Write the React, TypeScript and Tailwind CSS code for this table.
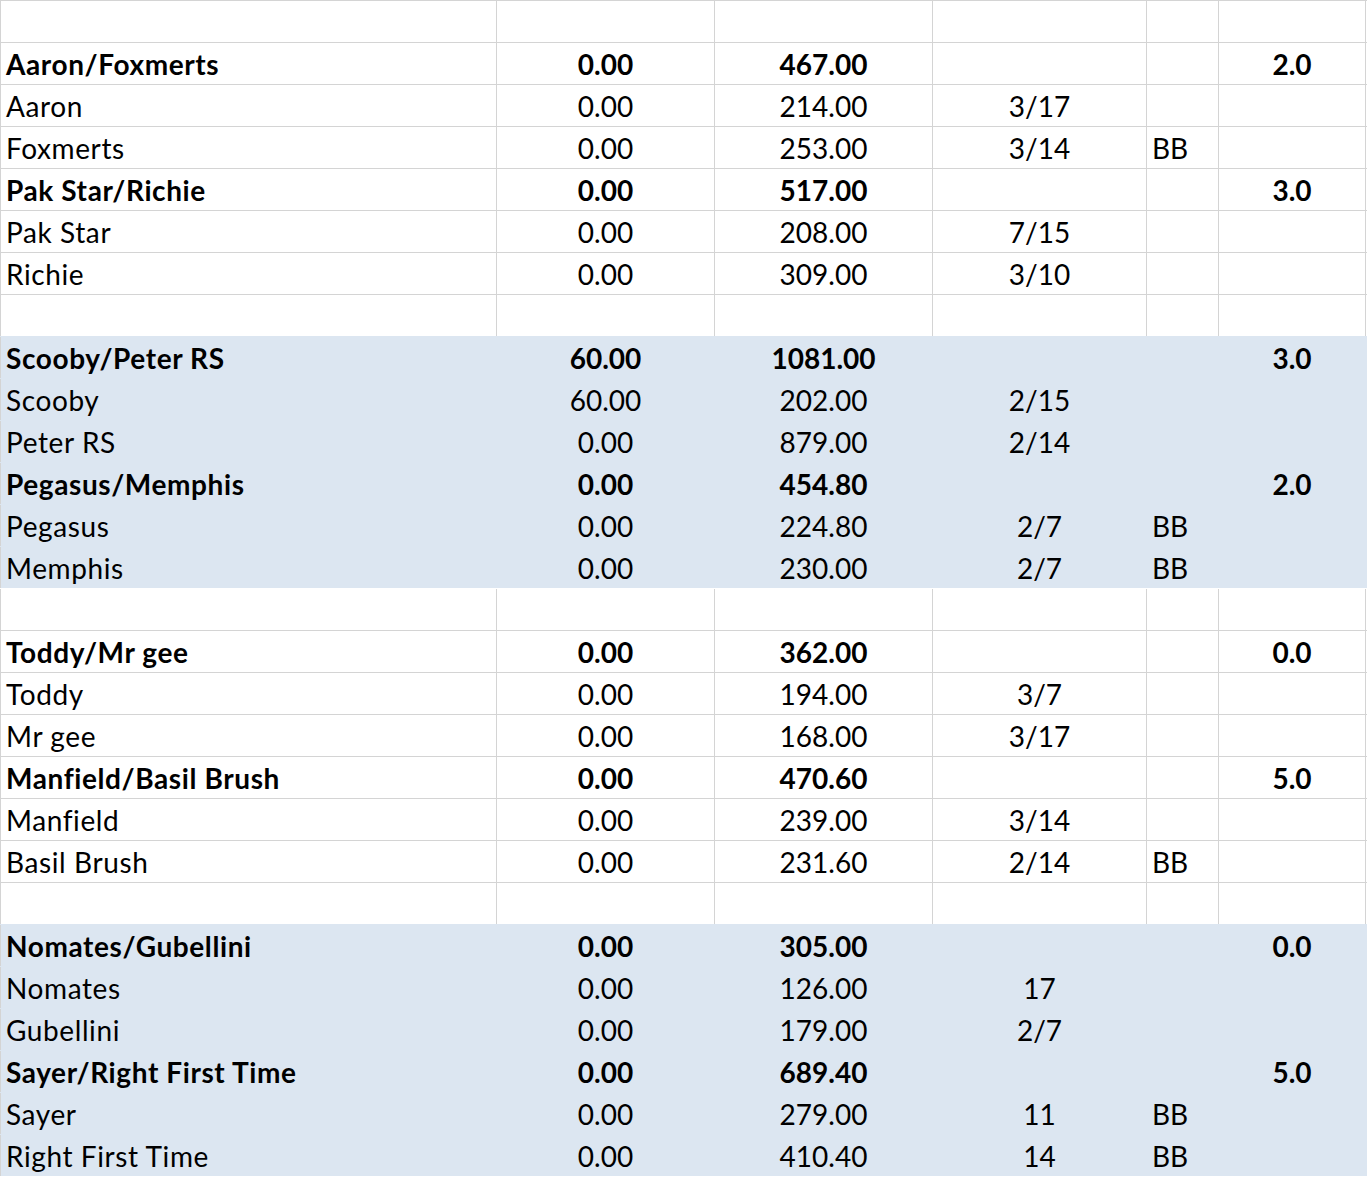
type Row = {
  name?: string;
  a?: string;
  b?: string;
  c?: string;
  d?: string;
  e?: string;
  bold?: boolean;
  blue?: boolean;
};

const rows: Row[] = [
  {},
  { name: 'Aaron/Foxmerts', a: '0.00', b: '467.00', e: '2.0', bold: true },
  { name: 'Aaron', a: '0.00', b: '214.00', c: '3/17' },
  { name: 'Foxmerts', a: '0.00', b: '253.00', c: '3/14', d: 'BB' },
  { name: 'Pak Star/Richie', a: '0.00', b: '517.00', e: '3.0', bold: true },
  { name: 'Pak Star', a: '0.00', b: '208.00', c: '7/15' },
  { name: 'Richie', a: '0.00', b: '309.00', c: '3/10' },
  {},
  { name: 'Scooby/Peter RS', a: '60.00', b: '1081.00', e: '3.0', bold: true, blue: true },
  { name: 'Scooby', a: '60.00', b: '202.00', c: '2/15', blue: true },
  { name: 'Peter RS', a: '0.00', b: '879.00', c: '2/14', blue: true },
  { name: 'Pegasus/Memphis', a: '0.00', b: '454.80', e: '2.0', bold: true, blue: true },
  { name: 'Pegasus', a: '0.00', b: '224.80', c: '2/7', d: 'BB', blue: true },
  { name: 'Memphis', a: '0.00', b: '230.00', c: '2/7', d: 'BB', blue: true },
  {},
  { name: 'Toddy/Mr gee', a: '0.00', b: '362.00', e: '0.0', bold: true },
  { name: 'Toddy', a: '0.00', b: '194.00', c: '3/7' },
  { name: 'Mr gee', a: '0.00', b: '168.00', c: '3/17' },
  { name: 'Manfield/Basil Brush', a: '0.00', b: '470.60', e: '5.0', bold: true },
  { name: 'Manfield', a: '0.00', b: '239.00', c: '3/14' },
  { name: 'Basil Brush', a: '0.00', b: '231.60', c: '2/14', d: 'BB' },
  {},
  { name: 'Nomates/Gubellini', a: '0.00', b: '305.00', e: '0.0', bold: true, blue: true },
  { name: 'Nomates', a: '0.00', b: '126.00', c: '17', blue: true },
  { name: 'Gubellini', a: '0.00', b: '179.00', c: '2/7', blue: true },
  { name: 'Sayer/Right First Time', a: '0.00', b: '689.40', e: '5.0', bold: true, blue: true },
  { name: 'Sayer', a: '0.00', b: '279.00', c: '11', d: 'BB', blue: true },
  { name: 'Right First Time', a: '0.00', b: '410.40', c: '14', d: 'BB', blue: true },
];

function SheetRow({ row, prevBlue }: { row: Row; prevBlue: boolean }) {
  // filled (blue) cells hide the gridlines, like Excel does
  const line = row.blue ? 'border-transparent' : 'border-[#d4d4d4]';
  const top = row.blue || prevBlue ? 'border-t-transparent' : 'border-t-[#d4d4d4]';
  const weight = row.bold ? 'font-bold' : 'font-normal';
  return (
    <div
      className={`flex h-[42px] border-t ${top} ${row.blue ? 'bg-[#dce6f1]' : 'bg-white'} ${weight}`}
    >
      <div className="w-[496px] shrink-0 border-l border-[#d4d4d4] flex items-center pl-[5px] tracking-[0.6px]">
        {row.name}
      </div>
      <div className={`w-[218px] shrink-0 border-l ${line} flex items-center justify-center`}>
        {row.a}
      </div>
      <div className={`w-[218px] shrink-0 border-l ${line} flex items-center justify-center`}>
        {row.b}
      </div>
      <div className={`w-[214px] shrink-0 border-l ${line} flex items-center justify-center`}>
        {row.c}
      </div>
      <div className={`w-[72px] shrink-0 border-l ${line} flex items-center pl-[5px]`}>
        {row.d}
      </div>
      <div className={`w-[148px] shrink-0 border-l border-r ${line} flex items-center justify-center`}>
        {row.e}
      </div>
    </div>
  );
}

export default function App() {
  return (
    <div className="min-h-screen bg-white text-black text-[28px] leading-none font-['Lato',sans-serif]">
      {rows.map((row, i) => (
        <SheetRow key={i} row={row} prevBlue={i > 0 && !!rows[i - 1]!.blue} />
      ))}
    </div>
  );
}
